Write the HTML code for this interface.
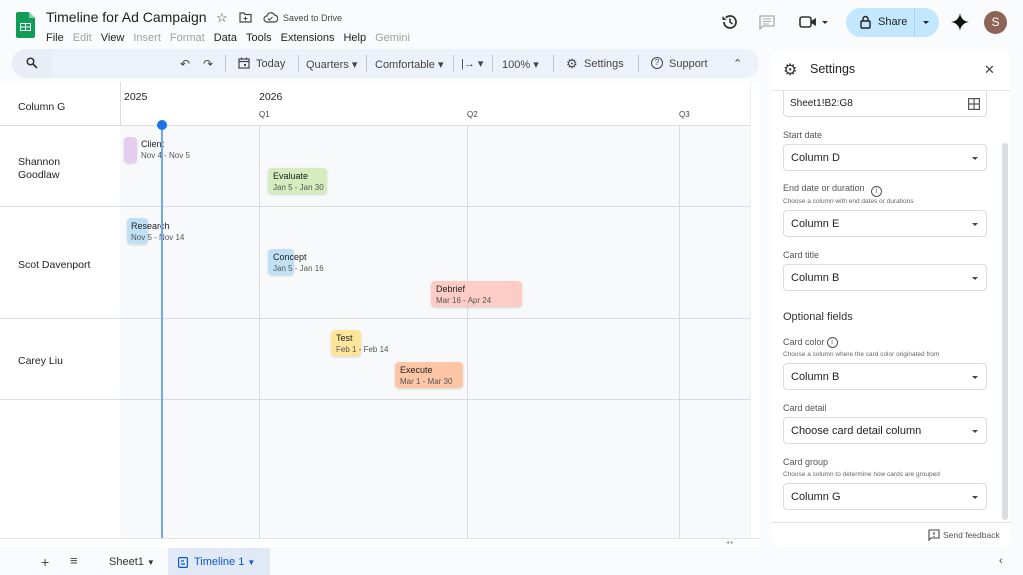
<!DOCTYPE html>
<html><head><meta charset="utf-8"><style>
*{box-sizing:border-box;margin:0;padding:0}
body{width:1023px;height:575px;overflow:hidden;background:#f9fbfd;font-family:"Liberation Sans",Arial,sans-serif;color:#1f1f1f;position:relative}
.a{position:absolute}
.menu span{margin-right:9px;font-size:11px}
.g{color:#a0a0a0}
.tb{font-size:11px;color:#444}
.vl{position:absolute;width:1px;background:#dadce0}
.hl{position:absolute;height:1px;background:#dadce0}
.card{position:absolute;border-radius:4px;height:26px;box-shadow:0 1px 2px rgba(0,0,0,.15)}
.ct{position:absolute;font-size:9px;color:#222;white-space:nowrap}
.ct b{font-weight:normal;display:block;font-size:9px}
.ct i{font-style:normal;color:#555;font-size:8px;display:block;margin-top:2px}
.lbl{position:absolute;left:783px;font-size:9px;color:#555}
.sub{position:absolute;left:783px;font-size:6.5px;color:#666}
.sel{position:absolute;left:783px;width:204px;height:27px;border:1px solid #dadce0;border-radius:4px;background:#fff;font-size:11px;padding:7px 0 0 7px}
.sel:after{content:"";position:absolute;right:8px;top:12px;border-left:3.5px solid transparent;border-right:3.5px solid transparent;border-top:3.5px solid #444}
.row{position:absolute;left:18px;font-size:10.5px}
</style></head><body>
<!-- logo -->
<svg class="a" style="left:16px;top:12px" width="19" height="26" viewBox="0 0 19 26"><path d="M2 0h11l6 6v18a2 2 0 0 1-2 2H2a2 2 0 0 1-2-2V2a2 2 0 0 1 2-2z" fill="#0f9d58"/><path d="M13 0l6 6h-6z" fill="#87ceac"/><rect x="4" y="11" width="11" height="8" fill="#fff"/><path d="M5 12h4v2.5H5zM10 12h4v2.5h-4zM5 15.5h4V18H5zM10 15.5h4V18h-4z" fill="#0f9d58"/></svg>
<div class="a" style="left:46px;top:9px;font-size:14px">Timeline for Ad Campaign</div>
<div class="a" style="left:216px;top:10px;font-size:13px;color:#444">☆</div>
<svg class="a" style="left:239px;top:12px" width="13" height="11" viewBox="0 0 13 11"><path d="M1 1h4l1 1.5h6V10H1z" fill="none" stroke="#444" stroke-width="1.2"/><path d="M6.5 4.5v4M4.5 6.5h4" stroke="#444"/></svg>
<svg class="a" style="left:263px;top:12px" width="15" height="11" viewBox="0 0 15 11"><path d="M4 10a3 3 0 0 1 0-6 4 4 0 0 1 7.5-1A3.5 3.5 0 0 1 11 10z" fill="none" stroke="#444" stroke-width="1.2"/><path d="M5 6.5l1.5 1.5 3-3" fill="none" stroke="#444"/></svg>
<div class="a" style="left:283px;top:13px;font-size:9px;color:#444">Saved to Drive</div>
<div class="a menu" style="left:46px;top:28px;white-space:nowrap"><span>File</span><span class="g">Edit</span><span>View</span><span class="g">Insert</span><span class="g">Format</span><span>Data</span><span>Tools</span><span>Extensions</span><span>Help</span><span class="g">Gemini</span></div>
<!-- right top -->
<svg class="a" style="left:721px;top:13px" width="18" height="18" viewBox="0 0 18 18"><path d="M3 9a6 6 0 1 0 1.8-4.3" fill="none" stroke="#333" stroke-width="1.8"/><path d="M1.5 3v4h4z" fill="#333"/><path d="M9 5.5V9l2.5 2" fill="none" stroke="#333" stroke-width="1.6"/></svg>
<svg class="a" style="left:759px;top:15px" width="16" height="15" viewBox="0 0 16 15"><path d="M1 1h14v10H4l-3 3z" fill="none" stroke="#aaa" stroke-width="1.3"/><path d="M4 4h8M4 6.5h8M4 9h6" stroke="#aaa"/></svg>
<svg class="a" style="left:799px;top:15px" width="32" height="14" viewBox="0 0 32 14"><rect x="1" y="2" width="11" height="10" rx="2" fill="none" stroke="#333" stroke-width="1.6"/><path d="M12 6l5-3v8l-5-3z" fill="#333"/><path d="M23 6h6l-3 3z" fill="#333"/></svg>
<div class="a" style="left:846px;top:8px;width:93px;height:29px;border-radius:15px;background:#c2e7ff"></div>
<div class="a" style="left:914px;top:8px;width:1px;height:29px;background:#a8d3f0"></div>
<svg class="a" style="left:860px;top:15px" width="11" height="14" viewBox="0 0 11 14"><rect x="1" y="6" width="9" height="7" rx="1" fill="none" stroke="#222" stroke-width="1.4"/><path d="M3 6V4a2.5 2.5 0 0 1 5 0v2" fill="none" stroke="#222" stroke-width="1.4"/></svg>
<div class="a" style="left:878px;top:16px;font-size:11px;color:#222">Share</div>
<div class="a" style="left:923px;top:21px;border-left:3.5px solid transparent;border-right:3.5px solid transparent;border-top:3.5px solid #222"></div>
<svg class="a" style="left:951px;top:13px" width="18" height="18" viewBox="0 0 18 18"><path d="M9 0C9.5 5 13 8.5 18 9 13 9.5 9.5 13 9 18 8.5 13 5 9.5 0 9 5 8.5 8.5 5 9 0z" fill="#111"/></svg>
<div class="a" style="left:984px;top:11px;width:23px;height:23px;border-radius:50%;background:#8d6455;color:#fff;font-size:12px;text-align:center;line-height:23px">S</div>
<!-- toolbar -->
<div class="a" style="left:12px;top:49px;width:747px;height:29px;border-radius:15px;background:#edf2fa"></div>
<div class="a" style="left:12px;top:49px;width:40px;height:29px;border-radius:15px 0 0 15px;background:#e9eef6"></div>
<svg class="a" style="left:26px;top:57px" width="12" height="12" viewBox="0 0 12 12"><circle cx="4.5" cy="4.5" r="3.3" fill="none" stroke="#333" stroke-width="1.5"/><path d="M7 7l4 4" stroke="#333" stroke-width="1.6"/></svg>
<div class="a tb" style="left:180px;top:57px;font-size:12px">↶</div>
<div class="a tb" style="left:203px;top:57px;font-size:12px">↷</div>
<div class="a" style="left:225px;top:55px;width:1px;height:17px;background:#c7c7c7"></div>
<svg class="a" style="left:238px;top:57px" width="12" height="12" viewBox="0 0 12 12"><rect x="1" y="2" width="10" height="9" fill="none" stroke="#444" stroke-width="1.2"/><path d="M1 4.5h10M3.5 0.5v2M8.5 0.5v2" stroke="#444" stroke-width="1.2"/><rect x="6" y="7" width="2" height="2" fill="#444"/></svg>
<div class="a tb" style="left:256px;top:58px">Today</div>
<div class="a" style="left:298px;top:55px;width:1px;height:17px;background:#c7c7c7"></div>
<div class="a tb" style="left:306px;top:58px">Quarters ▾</div>
<div class="a" style="left:366px;top:55px;width:1px;height:17px;background:#c7c7c7"></div>
<div class="a tb" style="left:375px;top:58px">Comfortable ▾</div>
<div class="a" style="left:453px;top:55px;width:1px;height:17px;background:#c7c7c7"></div>
<div class="a tb" style="left:461px;top:57px">|→ ▾</div>
<div class="a" style="left:492px;top:55px;width:1px;height:17px;background:#c7c7c7"></div>
<div class="a tb" style="left:502px;top:58px">100% ▾</div>
<div class="a" style="left:553px;top:55px;width:1px;height:17px;background:#c7c7c7"></div>
<div class="a tb" style="left:566px;top:56px;font-size:13px">⚙</div>
<div class="a tb" style="left:584px;top:58px">Settings</div>
<div class="a" style="left:638px;top:55px;width:1px;height:17px;background:#c7c7c7"></div>
<div class="a" style="left:651px;top:57px;width:12px;height:12px;border:1.2px solid #444;border-radius:50%;font-size:8px;text-align:center;line-height:10px;color:#444">?</div>
<div class="a tb" style="left:669px;top:58px">Support</div>
<div class="a tb" style="left:733px;top:57px">⌃</div>
<!-- timeline -->
<div class="a" style="left:0;top:82px;width:760px;height:465px;background:#fff"></div>
<div class="a" style="left:120px;top:126px;width:630px;height:412px;background:#f8f9fb"></div>
<div class="vl" style="left:120px;top:82px;height:44px"></div>
<div class="a" style="left:124px;top:91px;font-size:10.5px">2025</div>
<div class="a" style="left:259px;top:91px;font-size:10.5px">2026</div>
<div class="a" style="left:259px;top:110px;font-size:8px;color:#444">Q1</div>
<div class="a" style="left:467px;top:110px;font-size:8px;color:#444">Q2</div>
<div class="a" style="left:679px;top:110px;font-size:8px;color:#444">Q3</div>
<div class="a" style="left:18px;top:101px;font-size:10.5px">Column G</div>
<div class="vl" style="left:259px;top:126px;height:412px"></div>
<div class="vl" style="left:467px;top:126px;height:412px"></div>
<div class="vl" style="left:679px;top:126px;height:412px"></div>
<div class="hl" style="left:0;top:125px;width:750px"></div>
<div class="hl" style="left:0;top:206px;width:750px"></div>
<div class="hl" style="left:0;top:318px;width:750px"></div>
<div class="hl" style="left:0;top:399px;width:750px"></div>
<div class="row" style="top:156px;line-height:13px">Shannon<br>Goodlaw</div>
<div class="row" style="top:259px">Scot Davenport</div>
<div class="row" style="top:355px">Carey Liu</div>
<div class="card" style="left:124px;top:137px;width:13px;background:#e5cdf0"></div>
<div class="ct" style="left:141px;top:139px"><b>Client</b><i>Nov 4 - Nov 5</i></div>
<div class="card" style="left:268px;top:168px;width:59px;background:#d4ecbe"></div>
<div class="ct" style="left:273px;top:171px"><b>Evaluate</b><i>Jan 5 - Jan 30</i></div>
<div class="card" style="left:127px;top:218px;width:21px;background:#bfe0f5"></div>
<div class="ct" style="left:131px;top:221px"><b>Research</b><i>Nov 5 - Nov 14</i></div>
<div class="card" style="left:268px;top:249px;width:26px;background:#bfe0f5"></div>
<div class="ct" style="left:273px;top:252px"><b>Concept</b><i>Jan 5 - Jan 16</i></div>
<div class="card" style="left:431px;top:281px;width:91px;background:#fdccc5"></div>
<div class="ct" style="left:436px;top:284px"><b>Debrief</b><i>Mar 16 - Apr 24</i></div>
<div class="card" style="left:331px;top:330px;width:30px;background:#fde69a"></div>
<div class="ct" style="left:336px;top:333px"><b>Test</b><i>Feb 1 - Feb 14</i></div>
<div class="card" style="left:395px;top:362px;width:68px;background:#fec6a5"></div>
<div class="ct" style="left:400px;top:365px"><b>Execute</b><i>Mar 1 - Mar 30</i></div>
<div class="a" style="left:161px;top:126px;width:2px;height:412px;background:#74a6f0"></div>
<div class="a" style="left:157px;top:120px;width:10px;height:10px;border-radius:50%;background:#1a73e8"></div>
<div class="a" style="left:750px;top:82px;width:10px;height:456px;background:#fff;border-left:1px solid #eee"></div>
<div class="hl" style="left:0;top:538px;width:760px;background:#e3e3e3"></div>
<div class="a" style="left:726px;top:539px;font-size:6px;color:#999">◂ ▸</div>
<!-- settings panel -->
<div class="a" style="left:771px;top:50px;width:240px;height:497px;background:#fff;border-radius:12px"></div>
<div class="a" style="left:783px;top:60px;font-size:16px;color:#333">⚙</div>
<div class="a" style="left:810px;top:62px;font-size:12.5px">Settings</div>
<div class="a" style="left:984px;top:62px;font-size:13px;color:#444">✕</div>
<div class="hl" style="left:771px;top:90px;width:240px;background:#e6e6e6"></div>
<div class="a" style="left:783px;top:91px;width:204px;height:26px;border:1px solid #dadce0;border-top:none;border-radius:0 0 4px 4px;font-size:10px;padding:7px 0 0 6px">Sheet1!B2:G8</div>
<svg class="a" style="left:968px;top:98px" width="12" height="12" viewBox="0 0 12 12"><rect x="0.6" y="0.6" width="10.8" height="10.8" fill="none" stroke="#555" stroke-width="1.2"/><path d="M6 0.6v10.8M0.6 6h10.8" stroke="#555" stroke-width="1.2"/></svg>
<div class="a" style="left:1002px;top:143px;width:6px;height:377px;border-radius:3px;background:#dadce0"></div>
<div class="lbl" style="top:130px">Start date</div>
<div class="sel" style="top:144px">Column D</div>
<div class="lbl" style="top:183px">End date or duration <span style="display:inline-block;width:11px;height:11px;border:1px solid #555;border-radius:50%;font-size:7px;text-align:center;line-height:9px;margin-left:4px;vertical-align:-2px">i</span></div>
<div class="sub" style="top:198px">Choose a column with end dates or durations</div>
<div class="sel" style="top:210px">Column E</div>
<div class="lbl" style="top:250px">Card title</div>
<div class="sel" style="top:264px">Column B</div>
<div class="a" style="left:783px;top:311px;font-size:11px;color:#333">Optional fields</div>
<div class="lbl" style="top:337px">Card color<span style="display:inline-block;width:11px;height:11px;border:1px solid #555;border-radius:50%;font-size:7px;text-align:center;line-height:9px;margin-left:2px;vertical-align:1px">i</span></div>
<div class="sub" style="top:351px">Choose a column where the card color originated from</div>
<div class="sel" style="top:363px">Column B</div>
<div class="lbl" style="top:403px">Card detail</div>
<div class="sel" style="top:417px">Choose card detail column</div>
<div class="lbl" style="top:457px">Card group</div>
<div class="sub" style="top:471px">Choose a column to determine how cards are grouped</div>
<div class="sel" style="top:483px">Column G</div>
<div class="hl" style="left:771px;top:522px;width:240px;background:#e0e0e0"></div>
<svg class="a" style="left:928px;top:529px" width="12" height="12" viewBox="0 0 12 12"><path d="M1 1h10v8H3l-2 2z" fill="none" stroke="#444" stroke-width="1.1"/><path d="M6 3v3M6 7v1" stroke="#444" stroke-width="1.2"/></svg>
<div class="a" style="left:943px;top:530px;font-size:8.5px;color:#555">Send feedback</div>
<!-- bottom -->
<div class="a" style="left:41px;top:554px;font-size:14px;color:#444">+</div>
<div class="a" style="left:70px;top:553px;font-size:13px;color:#444">≡</div>
<div class="a" style="left:109px;top:556px;font-size:11px;color:#333">Sheet1 <span style="font-size:8px">▼</span></div>
<div class="a" style="left:168px;top:548px;width:102px;height:27px;background:#e1e9f7"></div>
<svg class="a" style="left:178px;top:557px" width="10" height="11" viewBox="0 0 10 11"><rect x="0.6" y="0.6" width="8.8" height="9.8" rx="1" fill="none" stroke="#0b57d0" stroke-width="1.2"/><path d="M3 4h3M3 7h4" stroke="#0b57d0" stroke-width="1.2"/></svg>
<div class="a" style="left:194px;top:556px;font-size:11px;color:#0b57d0">Timeline 1 <span style="font-size:8px">▼</span></div>
<div class="a" style="left:999px;top:555px;font-size:11px;color:#444">‹</div>
</body></html>
